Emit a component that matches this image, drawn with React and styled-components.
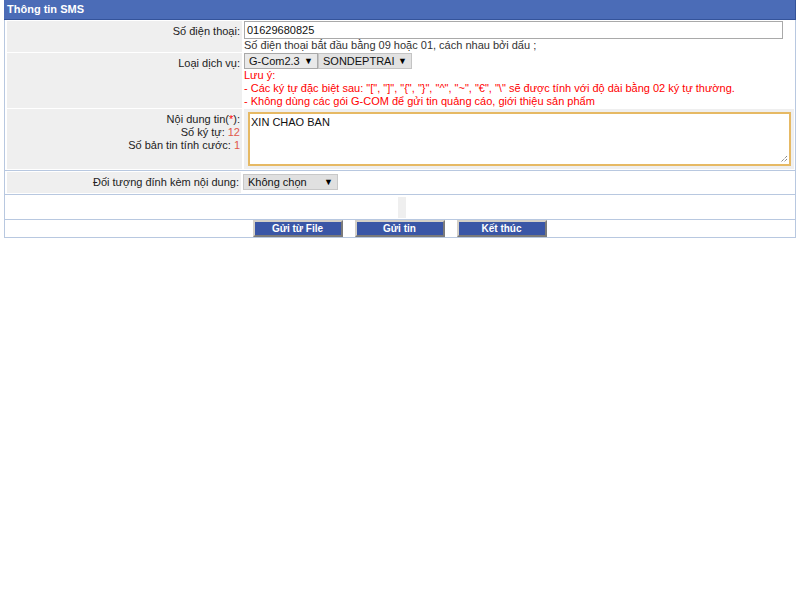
import React from 'react'
import styled, { createGlobalStyle } from 'styled-components'

const GlobalStyle = createGlobalStyle`
  body {
    margin: 0;
    background: #fff;
    font-family: "Liberation Sans", Arial, sans-serif;
    font-size: 11px;
    color: #222;
  }
`
const Page = styled.div`
  padding: 0 4px;
`
const Header = styled.div`
  height: 19px;
  line-height: 19px;
  background: #4b6cb7;
  color: #fff;
  font-weight: bold;
  font-size: 11px;
  padding-left: 3px;
  border-bottom: 1px solid #34539a;
  border-right: 1px solid #34539a;
`
const Panel = styled.div`
  border: 1px solid #b8c8e0;
  border-top: none;
`
const FormGrid = styled.div`
  display: grid;
  grid-template-columns: 235px 1fr;
  column-gap: 2px;
  row-gap: 1px;
  padding: 1px 1px 1px 2px;
`
const Label = styled.div`
  background: #efefef;
  text-align: right;
  padding: ${p => p.$top || 4}px 2px 0 0;
  line-height: 13px;
`
const Value = styled.div`
  background: ${p => (p.$gray ? '#efefef' : '#fff')};
  padding: ${p => p.$pad || '0'};
  line-height: 13px;
`
const TextInput = styled.div`
  width: 533px;
  height: 16px;
  border: 1px solid #a9a9a9;
  padding: 0 2px;
  line-height: 16px;
  font-size: 11px;
  color: #111;
`
const Hint = styled.div`
  color: #333;
  line-height: 13px;
`
const Note = styled.div`
  color: #f00;
  line-height: 13px;
`
const Red = styled.span`
  color: ${p => p.$soft ? '#e0584a' : '#f00'};
`
const SelectRow = styled.div`
  display: flex;
`
const Select = styled.div`
  box-sizing: border-box;
  width: ${p => p.$w}px;
  height: 16px;
  display: flex;
  align-items: center;
  justify-content: space-between;
  padding: 0 4px;
  background: ${p => p.$bg || '#e9e9e9'};
  border: 1px solid ${p => p.$border || '#a9a9a9'};
  color: #111;
  font-size: 11px;
`
const Arrow = styled.span`
  font-size: 9px;
  color: #000;
`
const TextArea = styled.div`
  height: 46px;
  border: 2px solid #e6b964;
  background: #fff;
  padding: 2px 1px;
  font-size: 11px;
  color: #111;
  line-height: 13px;
  position: relative;
`
const Grip = styled.svg`
  position: absolute;
  right: 1px;
  bottom: 1px;
`
const Row = styled.div`
  border-top: 1px solid #b8c8e0;
  display: ${p => p.$grid ? 'grid' : 'flex'};
  grid-template-columns: 236px 1fr;
  column-gap: 2px;
  justify-content: center;
  align-items: stretch;
  height: ${p => p.$h}px;
`
const AttachLabel = styled.div`
  background: #efefef;
  text-align: right;
  padding-right: 2px;
  line-height: 21px;
  margin: 1px 0 1px 2px;
`
const AttachValue = styled.div`
  padding-top: 3px;
`
const Spacer = styled.div`
  width: 8px;
  height: 21px;
  background: #efefef;
  margin: 2px 0 0 3px;
`
const Button = styled.div`
  box-sizing: border-box;
  width: 90px;
  height: 17px;
  background: #3a56a6;
  color: #fff;
  font-weight: bold;
  font-size: 10px;
  text-align: center;
  line-height: 13px;
  border: 2px solid;
  border-color: #d4d0c8 #7a7a7a #7a7a7a #d4d0c8;
`
const Buttons = styled.div`
  display: flex;
  gap: 12px;
  margin-left: -1px;
`

export default function App() {
  return (
    <Page>
      <GlobalStyle />
      <Header>Thông tin SMS</Header>
      <Panel>
        <FormGrid>
          <Label>Số điện thoại:</Label>
          <Value>
            <TextInput>01629680825</TextInput>
            <Hint>Số điện thoại bắt đầu bằng 09 hoặc 01, cách nhau bởi dấu ;</Hint>
          </Value>
          <Label>Loại dịch vụ:</Label>
          <Value>
            <SelectRow>
              <Select $w={74}>G-Com2.3 <Arrow>▼</Arrow></Select>
              <Select $w={94} $bg="#e2e2e2" $border="#c4c4c4">SONDEPTRAI <Arrow>▼</Arrow></Select>
            </SelectRow>
            <Note>Lưu ý:</Note>
            <Note>- Các ký tự đặc biệt sau: "[", "]", "{'{'}", "{'}'}", "^", "~", "€", "\" sẽ được tính với độ dài bằng 02 ký tự thường.</Note>
            <Note>- Không dùng các gói G-COM để gửi tin quảng cáo, giới thiệu sản phẩm</Note>
          </Value>
          <Label $top={4}>
            <div>Nội dung tin(<Red>*</Red>):</div>
            <div>Số ký tự: <Red $soft>12</Red></div>
            <div>Số bản tin tính cước: <Red $soft>1</Red></div>
          </Label>
          <Value $gray $pad="3px 3px 3px 4px">
            <TextArea>
              XIN CHAO BAN
              <Grip width="9" height="9" viewBox="0 0 9 9">
                <path d="M8 2L2 8M8 5L5 8" stroke="#555" strokeWidth="1" strokeDasharray="1 1" />
              </Grip>
            </TextArea>
          </Value>
        </FormGrid>
        <Row $grid $h={23}>
          <AttachLabel>Đối tượng đính kèm nội dung:</AttachLabel>
          <AttachValue>
            <Select $w={95} $bg="#e0e0e0" $border="#c8c8c8">Không chọn <Arrow>▼</Arrow></Select>
          </AttachValue>
        </Row>
        <Row $h={24}>
          <Spacer />
        </Row>
        <Row $h={17}>
          <Buttons>
            <Button>Gửi từ File</Button>
            <Button>Gửi tin</Button>
            <Button>Kết thúc</Button>
          </Buttons>
        </Row>
      </Panel>
    </Page>
  )
}
